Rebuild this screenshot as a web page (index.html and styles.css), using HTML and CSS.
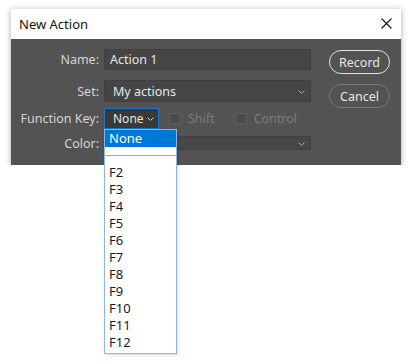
FILE: index.html
```html
<!DOCTYPE html>
<html lang="en">
<head>
    <meta charset="UTF-8">
    <title>New Action</title>
    <link rel="stylesheet" href="styles.css">
</head>
<body>
    <div class="dialog">
        <div class="title-bar">
            <span class="title">New Action</span>
            <svg class="close" width="11" height="11" viewBox="0 0 11 11">
                <path d="M0.5 0.5 L10.5 10.5 M10.5 0.5 L0.5 10.5" stroke="#111" stroke-width="1.1" fill="none"/>
            </svg>
        </div>
        <div class="dialog-body">
            <div class="form">
                <div class="row row-name">
                    <label class="label">Name:</label>
                    <div class="field text-field">Action 1</div>
                </div>
                <div class="row row-set">
                    <label class="label">Set:</label>
                    <div class="field select-field wide">
                        <span>My actions</span>
                        <svg class="chev" width="7" height="4" viewBox="0 0 7 4"><path d="M0.5 0.5 L3.5 3.5 L6.5 0.5" stroke="#aaa" fill="none"/></svg>
                    </div>
                </div>
                <div class="row row-fkey">
                    <label class="label">Function Key:</label>
                    <div class="field select-field key-select">
                        <span>None</span>
                        <svg class="chev" width="7" height="4" viewBox="0 0 7 4"><path d="M0.5 0.5 L3.5 3.5 L6.5 0.5" stroke="#ccc" fill="none"/></svg>
                    </div>
                    <div class="check"><span class="box"></span>Shift</div>
                    <div class="check"><span class="box"></span>Control</div>
                </div>
                <div class="row row-color">
                    <label class="label">Color:</label>
                    <div class="field select-field wide color-select">
                        <span></span>
                        <svg class="chev" width="7" height="4" viewBox="0 0 7 4"><path d="M0.5 0.5 L3.5 3.5 L6.5 0.5" stroke="#aaa" fill="none"/></svg>
                    </div>
                </div>
            </div>
            <div class="buttons">
                <button class="btn btn-primary">Record</button>
                <button class="btn">Cancel</button>
            </div>
        </div>
    </div>

    <ul class="key-list">
        <li class="selected">None</li>
        <li class="separator"></li>
        <li>F2</li>
        <li>F3</li>
        <li>F4</li>
        <li>F5</li>
        <li>F6</li>
        <li>F7</li>
        <li>F8</li>
        <li>F9</li>
        <li>F10</li>
        <li>F11</li>
        <li>F12</li>
    </ul>
</body>
</html>
```

FILE: styles.css
```css
/* BODY */
body {
    margin: 0;
    background: #fff;
    font-family: "Noto Sans", "Open Sans", sans-serif;
    font-size: 12.5px;
}

/* Dialog */
.dialog {
    margin: 9px 0 0 11px;
    width: 390px;
    box-shadow: 0 1px 6px rgba(0, 0, 0, 0.35);
}
.title-bar {
    height: 30px;
    background: #fff;
    display: flex;
    align-items: center;
    justify-content: space-between;
    padding: 0 9px 0 8px;
}
.title {
    font-size: 13px;
    color: #111;
}
.close {
    margin-top: -1px;
}
.dialog-body {
    background: #535353;
    display: flex;
    padding: 10px 11px 14px 0;
    height: 102px;
}

/* Form rows */
.form {
    width: 300px;
}
.row {
    display: flex;
    align-items: center;
}
.row-name { height: 21px; }
.row-set { height: 22px; margin-top: 10px; }
.row-fkey { height: 21px; margin-top: 6px; }
.row-color { height: 14px; margin-top: 7px; }

.label {
    width: 88px;
    margin-right: 5px;
    text-align: right;
    color: #d4d4d4;
}
.field {
    box-sizing: border-box;
    height: 100%;
    border: 1px solid #3f3f3f;
    background: #454545;
    color: #e6e6e6;
    display: flex;
    align-items: center;
}
.text-field {
    width: 207px;
    padding-left: 5px;
}
.select-field {
    justify-content: space-between;
    padding: 0 5px 0 8px;
}
.wide {
    width: 207px;
}
.key-select {
    width: 55px;
    background: #393939;
    border: 1px solid #1b74c9;
    padding-right: 4px;
    font-size: 12px;
}
.color-select {
    background: #474747;
}
.chev {
    margin-top: 1px;
}

/* Checkboxes */
.check {
    display: flex;
    align-items: center;
    color: #7d7d7d;
    margin-left: 10px;
}
.check + .check {
    margin-left: 20px;
}
.box {
    box-sizing: border-box;
    width: 12px;
    height: 11px;
    border: 1px solid #5f5f5f;
    background: #4b4b4b;
    margin-right: 7px;
}

/* Buttons */
.buttons {
    margin-left: 18px;
    padding-top: 1px;
    display: flex;
    flex-direction: column;
    gap: 10px;
}
.btn {
    width: 61px;
    height: 24px;
    border-radius: 12px;
    border: 1.5px solid #7a7a7a;
    background: transparent;
    color: #e6e6e6;
    font-family: "Noto Sans", "Open Sans", sans-serif;
    font-size: 12.5px;
    padding: 0;
}
.btn-primary {
    border-color: #e2e2e2;
}

/* Function key dropdown list */
.key-list {
    position: absolute;
    left: 104px;
    top: 129px;
    width: 73px;
    margin: 0;
    padding: 0 0 2px 0;
    list-style: none;
    background: #fff;
    border: 1px solid #8ab6e6;
    box-sizing: border-box;
    box-shadow: 1px 1px 3px rgba(0, 0, 0, 0.15);
}
.key-list li {
    height: 17px;
    line-height: 17px;
    padding-left: 4px;
    color: #1a1a1a;
    font-size: 13px;
}
.key-list .selected {
    background: #0078d7;
    color: #fff;
}
.key-list .separator {
    position: relative;
}
.key-list .separator::after {
    content: "";
    position: absolute;
    left: 0;
    right: 0;
    top: 8px;
    height: 1px;
    background: #a8a8a8;
}
```
